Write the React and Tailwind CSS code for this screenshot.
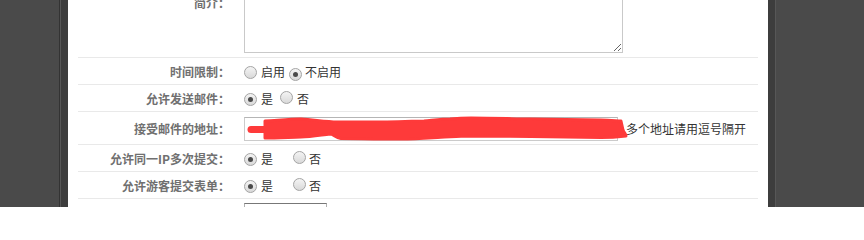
import React from 'react';

const Radio = ({ checked }) => (
    <span className="inline-flex items-center justify-center w-[13px] h-[13px] rounded-full border border-[#a4a4a4] bg-linear-to-b from-[#f4f4f4] to-[#d9d9d9] shrink-0">
        {checked && <span className="w-[5px] h-[5px] rounded-full bg-[#4a4a4a]" />}
    </span>
);

const Row = ({ label, children, h = 'h-[27px]' }) => (
    <div className={`flex shrink-0 items-center border-b border-[#e9e9e9] ${h}`}>
        <div className="w-[152px] text-right text-[12px] font-bold text-[#707070] pt-[2px]">{label}</div>
        <div className="ml-[14px] flex items-center text-[12px] text-[#333] pt-[2px]">{children}</div>
    </div>
);

export default function App() {
    return (
        <div
            className="flex w-[864px] h-[207px] overflow-hidden bg-[#4a4a4a]"
            style={{ fontFamily: '"Noto Sans CJK SC", "Liberation Sans", sans-serif' }}
        >
            {/* left frame */}
            <div className="w-[59px] bg-[#4a4a4a]" />
            <div className="w-[1px] bg-[#333]" />
            <div className="w-[1px] bg-[#575757]" />
            <div className="w-[7px] bg-[#3d3d3d]" />

            {/* form panel */}
            <div className="w-[700px] bg-white px-[10px] flex flex-col">
                <div className="flex shrink-0 items-center border-b border-[#e9e9e9] py-[4px] mt-[-51px]">
                    <div className="w-[152px] text-right text-[12px] font-bold text-[#707070]">简介：</div>
                    <textarea className="ml-[14px] w-[379px] h-[100px] border border-[#c9c9c9] bg-white" />
                </div>

                <Row label="时间限制：">
                    <Radio />
                    <span className="ml-[4px]">启用</span>
                    <span className="ml-[4px]"><Radio checked /></span>
                    <span className="ml-[3px]">不启用</span>
                </Row>

                <Row label="允许发送邮件：">
                    <Radio checked />
                    <span className="ml-[4px]">是</span>
                    <span className="ml-[7px]"><Radio /></span>
                    <span className="ml-[4px]">否</span>
                </Row>

                <Row label="接受邮件的地址：" h="h-[33px]">
                    <div className="relative w-[374px] h-[24px] border border-[#cbcbcb] border-t-[#b5b5b5] bg-white">
                        <div className="absolute left-[4px] top-[10px] text-[8px] leading-none text-[#333]">···</div>
                        <svg className="absolute left-0 top-0 overflow-visible" width="374" height="24" viewBox="0 0 374 24">
                            <path d="M6 11.5 L24 11.5" stroke="#fe3a3a" strokeWidth="7" strokeLinecap="round" fill="none" />
                            <path
                                d="M20 3 C 36 2, 46 1, 56 1 C 70 2, 82 4, 92 4 L 142 4 C 160 4, 170 3, 179 3 C 190 2, 198 1, 205 1 C 216 0, 222 0, 226 0 C 250 0, 270 1, 286 1 L 356 2 C 366 2, 372 3, 376 3 L 378 12 C 379 15, 381 16, 381 18 C 372 19, 364 19.5, 356 19.5 C 320 19, 300 18.5, 286 18.5 C 250 18, 236 18, 221 18 C 205 18.5, 196 19.5, 188 19.7 C 176 20.5, 166 21, 156 21 C 130 21, 110 20.5, 96 20.5 C 90 19, 88 16, 85 16 C 76 17, 66 19, 56 19 C 40 19.5, 30 20, 20 20 Z"
                                fill="#fe3a3a"
                                stroke="#fe3a3a"
                                strokeWidth="3"
                                strokeLinejoin="round"
                            />
                        </svg>
                    </div>
                    <span className="ml-[8px]">多个地址请用逗号隔开</span>
                </Row>

                <Row label="允许同一IP多次提交：">
                    <Radio checked />
                    <span className="ml-[4px]">是</span>
                    <span className="ml-[20px]"><Radio /></span>
                    <span className="ml-[3px]">否</span>
                </Row>

                <Row label="允许游客提交表单：">
                    <Radio checked />
                    <span className="ml-[4px]">是</span>
                    <span className="ml-[20px]"><Radio /></span>
                    <span className="ml-[3px]">否</span>
                </Row>

                <div className="flex shrink-0 items-start pt-[4px]">
                    <div className="w-[152px]" />
                    <div className="ml-[14px] w-[83px] h-[24px] border border-[#b0b0b0] border-t-[#777]" />
                </div>
            </div>

            {/* right frame */}
            <div className="w-[7px] bg-[#3d3d3d]" />
            <div className="w-[1px] bg-[#575757]" />
            <div className="flex-1 bg-[#4a4a4a]" />
        </div>
    );
}
